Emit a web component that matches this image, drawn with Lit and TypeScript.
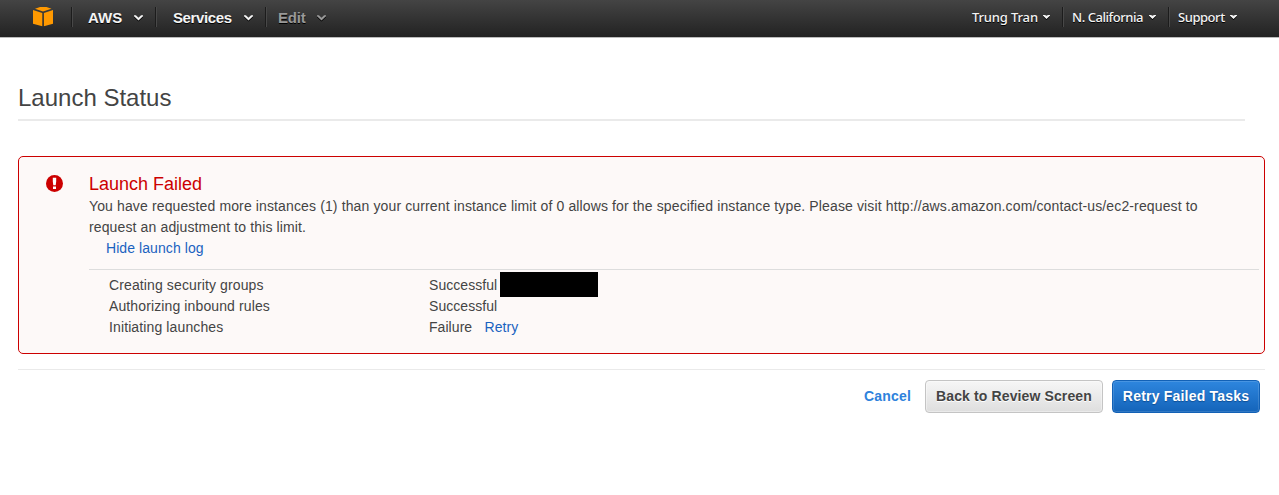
import { LitElement, html, css, svg } from "lit";
import { customElement } from "lit/decorators.js";

const chevron = () => html`<svg class="chev" width="9" height="6" viewBox="0 0 9 6">
  ${svg`<path d="M0 0.2H1.9L4.5 2.7L7.1 0.2H9V1.3L4.5 5.6L0 1.3Z" fill="currentColor"/>`}
</svg>`;
const caret = () => html`<svg class="chev" width="7" height="4" viewBox="0 0 7 4">
  ${svg`<path d="M0 0H2L3.5 .8L5 0H7V.8L3.5 4L0 .8Z" fill="currentColor"/>`}
</svg>`;

@customElement("nav-bar")
export class NavBar extends LitElement {
  static styles = css`
    :host { display: block; }
    .bar { box-sizing: border-box; height: 38px; display: flex; align-items: flex-start; background: linear-gradient(#444, #222); border-bottom: 1px solid #bbb; color: #fff; font: bold 15px/20px "Liberation Sans", Arial, sans-serif; text-shadow: 0 1px 0 #000; white-space: nowrap; }
    .logo { width: 20px; height: 20px; margin: 7px 18px 0 33px; }
    .sep { width: 1px; height: 20px; margin-top: 7px; background: #1c1c1c; border-right: 1px solid #484848; }
    .item { box-sizing: border-box; display: flex; align-items: center; justify-content: space-between; margin-top: 8px; height: 20px; color: #f4f4f4; }
    .aws { width: 55px; margin: 8px 12px 0 15px; }
    .services { width: 80px; margin: 8px 12px 0 16px; letter-spacing: -0.38px; }
    .edit { width: 48px; margin: 8px 0 0 11px; color: #999; letter-spacing: -0.2px; }
    .space { flex: 1; }
    .small { font: 500 13px/20px "Noto Sans", sans-serif; margin-top: 7px; }
    .user { width: 78px; margin-right: 12px; letter-spacing: -0.15px; }
    .region { width: 84px; margin: 7px 12px 0 8px; letter-spacing: -0.45px; }
    .support { width: 59px; margin: 7px 42px 0 8px; letter-spacing: -0.45px; }
    .chev { filter: drop-shadow(0 1px 0 #000); }
  `;
  render() {
    return html`<nav class="bar">
      <svg class="logo" viewBox="0 0 20 20">
        <path d="M2 1.8L7 0H13.5L18.5 1.8L10 4.6Z M0 3L9.3 6V19.2L0 16.8Z M20 3L10.9 6V19.2L20 16.8Z" fill="#f90" />
      </svg>
      <span class="sep"></span>
      <span class="item aws"><span>AWS</span>${chevron()}</span>
      <span class="sep"></span>
      <span class="item services"><span>Services</span>${chevron()}</span>
      <span class="sep"></span>
      <span class="item edit"><span>Edit</span>${chevron()}</span>
      <span class="space"></span>
      <span class="item small user"><span>Trung Tran</span>${caret()}</span>
      <span class="sep"></span>
      <span class="item small region"><span>N. California</span>${caret()}</span>
      <span class="sep"></span>
      <span class="item small support"><span>Support</span>${caret()}</span>
    </nav>`;
  }
}

@customElement("launch-alert")
export class LaunchAlert extends LitElement {
  static styles = css`
    :host { display: block; }
    .box { box-sizing: border-box; height: 198px; border: 1px solid #c00; border-radius: 5px; background: #fdf9f8; display: flex; padding: 17px 5px 0 27px; }
    .icon { flex: none; width: 17px; height: 17px; margin: .5px 25.6px 0 .4px; }
    .content { flex: 1; min-width: 0; }
    .title { margin: 0; color: #c00; font-size: 18px; line-height: 21px; font-weight: normal; }
    .message { line-height: 21px; margin: 1px 0 0; letter-spacing: 0.13px; }
    .link { color: #1a62c0; }
    .toggle { display: block; padding-left: 17px; letter-spacing: 0.08px; }
    .log { margin-top: 10px; border-top: 1px solid #ddd; padding: 5px 0 0 20px; }
    .row { display: grid; grid-template-columns: 320px 1fr; height: 21px; letter-spacing: 0.12px; }
    .result { display: flex; letter-spacing: 0.06px; }
    .redacted { width: 98px; height: 25px; margin: -3px 0 0 2.6px; background: #000; }
    .retry { margin-left: 12.4px; }
  `;
  render() {
    return html`<section class="box">
      <svg class="icon" viewBox="0 0 17 17">
        <circle cx="8.5" cy="8.5" r="8.5" fill="#c00" />
        <path d="M6.8 2.8H10.2V6.5L9.7 10.3H7.3L6.8 6.5Z M7 11.4H10V14H7Z" fill="#fff" />
      </svg>
      <div class="content">
        <h2 class="title">Launch Failed</h2>
        <p class="message">You have requested more instances (1) than your current instance limit of 0 allows for the specified instance type. Please visit http://aws.amazon.com/contact-us/ec2-request to<br />request an adjustment to this limit.</p>
        <a class="link toggle">Hide launch log</a>
        <div class="log">
          <div class="row"><span>Creating security groups</span><span class="result">Successful<span class="redacted"></span></span></div>
          <div class="row"><span>Authorizing inbound rules</span><span class="result">Successful</span></div>
          <div class="row"><span>Initiating launches</span><span class="result">Failure<a class="link retry">Retry</a></span></div>
        </div>
      </div>
    </section>`;
  }
}

@customElement("app-root")
export class AppRoot extends LitElement {
  static styles = css`
    :host { display: block; height: 495px; overflow: hidden; background: #fff; color: #444; font: 14px/21px "Liberation Sans", Arial, sans-serif; }
    .page { padding: 45px 14px 0 18px; }
    .heading { margin: 0 20px 35px 0; height: 36px; border-bottom: 2px solid #eaeaea; font-size: 24px; line-height: 30px; font-weight: normal; }
    .actions { margin-top: 15px; border-top: 1px solid #eaeaea; padding: 10px 5px 0 0; display: flex; justify-content: flex-end; align-items: center; font-weight: bold; white-space: nowrap; }
    .cancel { color: #2e82dc; margin-right: 14px; letter-spacing: .2px; }
    .btn { box-sizing: border-box; height: 33px; border-radius: 4px; font: inherit; letter-spacing: .2px; padding: 0; }
    .back { width: 178px; margin-right: 9px; color: #444; letter-spacing: .12px; border: 1px solid #c4c4c4; background: linear-gradient(#f6f6f6, #dedede); box-shadow: inset 0 0 0 1px #ffffff60; text-shadow: 0 1px 0 #fff; }
    .primary { width: 148px; color: #fff; border: 1px solid #1261b6; background: linear-gradient(#2e86de, #1464ba); box-shadow: inset 0 0 0 1px #ffffff20; text-shadow: 0 1px 1px #0d4d94; }
  `;
  render() {
    return html`<nav-bar></nav-bar>
      <main class="page">
        <h1 class="heading">Launch Status</h1>
        <launch-alert></launch-alert>
        <footer class="actions">
          <a class="cancel">Cancel</a>
          <button class="btn back">Back to Review Screen</button>
          <button class="btn primary">Retry Failed Tasks</button>
        </footer>
      </main>`;
  }
}
